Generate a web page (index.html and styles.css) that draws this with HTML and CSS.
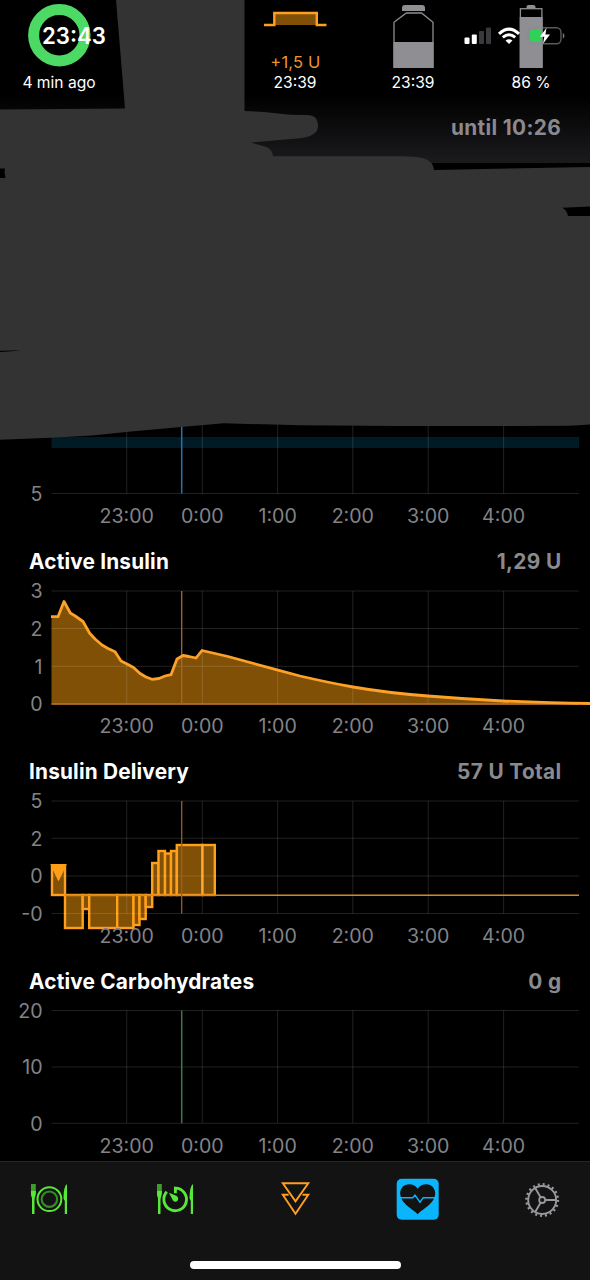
FILE: index.html
```html
<!DOCTYPE html>
<html lang="en">
<head>
    <meta charset="UTF-8">
    <meta name="viewport" content="width=device-width, initial-scale=1.0">
    <title>Loop</title>
    <link rel="stylesheet" href="styles.css">
</head>
<body>
    <div class="screen">
        <header class="hud">
            <div class="hud-item">
                <svg class="hud-icon" viewBox="0 0 118 71">
                    <circle cx="59.3" cy="35.3" r="25.7" fill="none" stroke="#4cd964" stroke-width="11"/>
                </svg>
                <span class="hud-label">4 min ago</span>
            </div>
            <div class="hud-item"></div>
            <div class="hud-item">
                <svg class="hud-icon" viewBox="0 0 118 71">
                    <rect x="38" y="13" width="42" height="12" fill="#805006"/>
                    <path d="M28 25H38.3V13H80.8V25H90.5" fill="none" stroke="#ff9f22" stroke-width="2.4"/>
                    <text class="basal" x="59.3" y="67.5" text-anchor="middle" textLength="50">+1,5 U</text>
                </svg>
                <span class="hud-label">23:39</span>
            </div>
            <div class="hud-item">
                <svg class="hud-icon" viewBox="0 0 118 71">
                    <path d="M48 11V8Q48 5 51 5H68Q71 5 71 8V11Z" fill="#8e8e93"/>
                    <path d="M40 67.3V22.3L52.3 13H67.5L79 22.3V67.3Z" fill="none" stroke="#8e8e93" stroke-width="1.3"/>
                    <rect x="39.5" y="42" width="40" height="26" fill="#8e8e93"/>
                </svg>
                <span class="hud-label">23:39</span>
            </div>
            <div class="hud-item">
                <svg class="hud-icon" viewBox="0 0 118 71">
                    <path d="M54.5 8.5V7Q54.5 5 56.5 5H61.5Q63.5 5 63.5 7V8.5Z" fill="#8e8e93"/>
                    <rect x="48.4" y="8.7" width="21.5" height="58.5" fill="none" stroke="#8e8e93" stroke-width="1.3"/>
                    <rect x="47.7" y="17" width="23" height="51" fill="#8e8e93"/>
                </svg>
                <span class="hud-label">86 %</span>
            </div>
        </header>

        <section class="status-row">
            <span class="value">until 10:26</span>
        </section>

        <section class="glucose">
            <svg class="chart" viewBox="0 0 590 378" height="378">
                <rect x="51.5" y="274" width="527.5" height="11" fill="#001a26"/>
                <path class="grid" d="M51.5 330.5H579M126.7 230V330.5M202.3 230V330.5M277.6 230V330.5M352.8 230V330.5M428.2 230V330.5M503.6 230V330.5"/>
                <path d="M181.7 230V330.5" stroke="#2c71aa" stroke-width="1.5"/>
                <g class="axis-y">
                    <text x="42.5" y="337.8">5</text>
                </g>
                <g class="axis-x">
                    <text x="126.7" y="360.2">23:00</text>
                    <text x="202.3" y="360.2">0:00</text>
                    <text x="277.6" y="360.2">1:00</text>
                    <text x="352.8" y="360.2">2:00</text>
                    <text x="428.2" y="360.2">3:00</text>
                    <text x="503.6" y="360.2">4:00</text>
                </g>
            </svg>
        </section>

        <section class="panel">
            <div class="panel-head">
                <h2 class="panel-title">Active Insulin</h2>
                <span class="value">1,29 U</span>
            </div>
            <svg class="chart" viewBox="0 0 590 168" height="168">
                <path d="M51.5 33.7H58L64 18.5L70.3 30L76 33.5L83 38.5L89.5 50L95 56L102 62L108 65.5L115 68.8L121 78L127 81L133.5 84.5L140 90.5L146 94L152 96.3L159 95.5L165 93L171 91.7L177 76L183 72.5L189 73.5L196 75L202 67.5L228 73.5L278 87.2L300 93Q328 99.5 353 104Q388 110 428 113Q465 116 503 118Q550 119.8 590 120.7V121.5H51.5Z" fill="#805006"/>
                <path class="grid" d="M51.5 8H579M51.5 45.5H579M51.5 83.3H579M126.7 8V121M202.3 8V121M277.6 8V121M352.8 8V121M428.2 8V121M503.6 8V121"/>
                <path d="M51.5 121H579" stroke="#b97334" stroke-width="1.3"/>
                <path d="M181.7 8V121" stroke="#a9652d" stroke-width="1.3"/>
                <path class="line" d="M51 33.7H58L64 18.5L70.3 30L76 33.5L83 38.5L89.5 50L95 56L102 62L108 65.5L115 68.8L121 78L127 81L133.5 84.5L140 90.5L146 94L152 96.3L159 95.5L165 93L171 91.7L177 76L183 72.5L189 73.5L196 75L202 67.5L228 73.5L278 87.2L300 93Q328 99.5 353 104Q388 110 428 113Q465 116 503 118Q550 119.8 590 120.5"/>
                <g class="axis-y">
                    <text x="42.5" y="15.2">3</text>
                    <text x="42.5" y="52.8">2</text>
                    <text x="42.5" y="90.5">1</text>
                    <text x="42.5" y="128.2">0</text>
                </g>
                <g class="axis-x">
                    <text x="126.7" y="150.2">23:00</text>
                    <text x="202.3" y="150.2">0:00</text>
                    <text x="277.6" y="150.2">1:00</text>
                    <text x="352.8" y="150.2">2:00</text>
                    <text x="428.2" y="150.2">3:00</text>
                    <text x="503.6" y="150.2">4:00</text>
                </g>
            </svg>
        </section>

        <section class="panel">
            <div class="panel-head">
                <h2 class="panel-title">Insulin Delivery</h2>
                <span class="value">57 U Total</span>
            </div>
            <svg class="chart" viewBox="0 0 590 168" height="168">
                <!-- temp basal doses -->
                <g class="doses">
                    <rect x="52" y="74" width="13" height="28"/>
                    <rect x="65" y="102" width="17.7" height="33"/>
                    <rect x="82.7" y="102" width="6.5" height="14"/>
                    <rect x="89.2" y="102" width="28" height="33"/>
                    <rect x="117.2" y="102" width="16.3" height="33"/>
                    <rect x="133.5" y="102" width="6" height="30"/>
                    <rect x="139.5" y="102" width="6.2" height="24"/>
                    <rect x="145.7" y="102" width="6.5" height="12"/>
                    <rect x="152.2" y="70" width="6.3" height="32"/>
                    <rect x="158.5" y="58" width="6.5" height="44"/>
                    <rect x="165" y="60.5" width="6" height="41.5"/>
                    <rect x="171" y="58" width="5.8" height="44"/>
                    <rect x="176.8" y="52" width="25.7" height="50"/>
                    <rect x="202.5" y="52" width="12.3" height="50"/>
                </g>
                <path class="grid" d="M51.5 8H579M51.5 45.3H579M51.5 83H579M51.5 120.5H579M126.7 8V120.5M202.3 8V120.5M277.6 8V120.5M352.8 8V120.5M428.2 8V120.5M503.6 8V120.5"/>
                <path d="M65 102.2H579" stroke="#d9861f" stroke-width="1.4"/>
                <path d="M181.7 8V120.5" stroke="#a05c24" stroke-width="1.3"/>
                <path d="M50.8 71.5H66.3L58.5 87.5Z" fill="#ff9f17" stroke="#ff9f17"/>
                <g class="axis-y">
                    <text x="42.5" y="15">5</text>
                    <text x="42.5" y="52.6">2</text>
                    <text x="42.5" y="90.4">0</text>
                    <text x="42.5" y="128">-0</text>
                </g>
                <g class="axis-x">
                    <text x="126.7" y="150.2">23:00</text>
                    <text x="202.3" y="150.2">0:00</text>
                    <text x="277.6" y="150.2">1:00</text>
                    <text x="352.8" y="150.2">2:00</text>
                    <text x="428.2" y="150.2">3:00</text>
                    <text x="503.6" y="150.2">4:00</text>
                </g>
            </svg>
        </section>

        <section class="panel panel-last">
            <div class="panel-head">
                <h2 class="panel-title">Active Carbohydrates</h2>
                <span class="value">0 g</span>
            </div>
            <svg class="chart" viewBox="0 0 590 158" height="158">
                <path class="grid" d="M51.5 7.5H579M51.5 64H579M51.5 120.3H579M126.7 7.5V120M202.3 7.5V120M277.6 7.5V120M352.8 7.5V120M428.2 7.5V120M503.6 7.5V120"/>
                <path d="M181.7 7.5V120.3" stroke="#3f7a38" stroke-width="1.5"/>
                <g class="axis-y">
                    <text x="42.5" y="14.5">20</text>
                    <text x="42.5" y="71">10</text>
                    <text x="42.5" y="127.5">0</text>
                </g>
                <g class="axis-x">
                    <text x="126.7" y="149.7">23:00</text>
                    <text x="202.3" y="149.7">0:00</text>
                    <text x="277.6" y="149.7">1:00</text>
                    <text x="352.8" y="149.7">2:00</text>
                    <text x="428.2" y="149.7">3:00</text>
                    <text x="503.6" y="149.7">4:00</text>
                </g>
            </svg>
        </section>

        <nav class="tabbar">
            <!-- carbs -->
            <svg class="tab" viewBox="0 0.5 42 42">
                <g fill="#57e83a">
                    <path d="M4 20H6.5V36.5H4Z"/>
                    <path d="M3 6.5H7.8V15Q7.8 18 6.5 19.5V22H4V19.5Q3 18 3 15Z" opacity=".65"/>
                    <path d="M3 13.5H7.8V16Q7.5 19 6.5 20.5H4Q3 18 3 16Z"/>
                    <path d="M39 6.5V36.5H36.8V23.5L35.5 21Q35.5 9 39 6.5Z"/>
                </g>
                <circle cx="21.4" cy="21.7" r="11.9" fill="none" stroke="#57e83a" stroke-width="2"/>
                <circle cx="21.4" cy="21.7" r="7.7" fill="none" stroke="#378a29" stroke-width="2.2"/>
            </svg>
            <!-- pre-meal target -->
            <svg class="tab" viewBox="-3 0.5 42 42">
                <g fill="#57e83a">
                    <path d="M4 20H6.5V36.5H4Z"/>
                    <path d="M3 6.5H7.8V15Q7.8 18 6.5 19.5V22H4V19.5Q3 18 3 15Z" opacity=".65"/>
                    <path d="M3 13.5H7.8V16Q7.5 19 6.5 20.5H4Q3 18 3 16Z"/>
                    <path d="M39 6.5V36.5H36.8V23.5L35.5 21Q35.5 9 39 6.5Z"/>
                    <path d="M15 15.2L22.8 18.6Q25.3 21.3 23.3 23.5Q20.9 25.3 18.8 22.7Z"/>
                </g>
                <path d="M21.4 15.8V10.6A11.3 11.3 0 1 1 12.8 14.3" fill="none" stroke="#57e83a" stroke-width="2.9"/>
            </svg>
            <!-- bolus -->
            <svg class="tab" viewBox="0.5 0.7 42 42">
                <path d="M14.1 17.5H8.3L21 36.6L33.8 17.5H28" fill="none" stroke="#ff9f22" stroke-width="1.9"/>
                <path d="M8.3 5.9H33.8L21 24Z" fill="none" stroke="#ff9f22" stroke-width="1.9"/>
            </svg>
            <!-- overrides, enabled -->
            <svg class="tab" viewBox="1.8 0.8 42 42">
                <rect x="0.5" y="1.5" width="42" height="41" rx="5" fill="#0ab5fc"/>
                <path d="M21.5 37C17 32 4 26.5 4 15.8C4 11 7.8 7 12.8 7C16.8 7 20 8.8 21.5 11.5C23 8.8 26.2 7 30.2 7C35.2 7 39 11 39 15.8C39 26.5 26 32 21.5 37Z" fill="#131313"/>
                <path d="M3.5 20.5H16.5L18.8 18L23.8 25L27 20.5H39.5" fill="none" stroke="#0ab5fc" stroke-width="1.4"/>
            </svg>
            <!-- settings -->
            <svg class="tab" viewBox="0 0 42 42">
                <g fill="none" stroke="#97979c">
                    <circle cx="21.2" cy="22" r="15.7" stroke-width="2.5" stroke-dasharray="2 2.932"/>
                    <circle cx="21.2" cy="22" r="14" stroke-width="1.9"/>
                    <circle cx="21.2" cy="22" r="3" stroke-width="1.8"/>
                    <path d="M24.2 22H35.2M19.7 19.4L14.2 9.9M19.7 24.6L14.2 34.1" stroke-width="1.9"/>
                </g>
            </svg>
        </nav>
        <div class="home-area">
            <div class="home-indicator"></div>
        </div>

        <!-- scribbled-out area -->
        <svg class="scribble" viewBox="0 0 590 445">
            <path d="M116 0L121 60L125 108.5L0 109.5V168.5H5L4.5 172L5.5 178H0V439.8L51 437.8L92 435.5L126 432L181 427L224 423.3L300 425.3L400 426H500L570 425.7L590 424.5V216H568Q567 210 562 207.8L590 206.5V167L434 170Q433 161 424 158.5Q416 156.3 400 156.3H273Q273 150 266 146.7Q259 145 251 142.5L300 138.3Q318 136 318 126Q318 115 307 115L290 114.8L264 112L244.5 111V0Z" fill="#333"/>
            <path d="M0 350.7L12 350.5L21 350L12 351.3L0 352Z" fill="#000"/>
        </svg>

        <div class="statusbar">
            <span class="clock">23:43</span>
            <svg class="status-icons" viewBox="0 0 102 24" width="102" height="24">
                <rect x="0.5" y="13.5" width="5" height="6.5" rx="1" fill="#fff"/>
                <rect x="7.8" y="10.5" width="5" height="9.5" rx="1" fill="#fff"/>
                <rect x="15" y="7" width="5" height="13" rx="1" fill="#3a3a3c"/>
                <rect x="22" y="3.5" width="5" height="16.5" rx="1" fill="#3a3a3c"/>
                <g fill="none" stroke="#fff" stroke-width="3">
                    <path d="M35 9.8Q45 0.3 55 9.8"/>
                    <path d="M38.8 13.4Q45 8 51.2 13.4"/>
                </g>
                <path d="M41.5 16.6Q45 13.8 48.5 16.6L45 20Z" fill="#fff"/>
                <rect x="64" y="3.7" width="33" height="16" rx="4.5" fill="none" stroke="#8b8b8f" stroke-opacity=".65" stroke-width="1.4"/>
                <path d="M98.8 9V14.5Q100.5 13.8 100.5 11.7Q100.5 9.8 98.8 9Z" fill="#77777a"/>
                <path d="M68.5 5.7H77.5V17.7H68.5Q66 17.7 66 15.2V8.2Q66 5.7 68.5 5.7Z" fill="#30d158"/>
                <path d="M82.5 3.8L76 12.8H80.3L79 19.8L86 10.5H81.4Z" fill="#fff"/>
            </svg>
        </div>
    </div>
</body>
</html>
```
FILE: styles.css
```css
* {
    margin: 0;
    padding: 0;
    box-sizing: border-box;
}

body {
    font-family: Inter, "Liberation Sans", sans-serif;
    background: #000;
    color: #fff;
}

.screen {
    position: relative;
    width: 590px;
    height: 1280px;
    overflow: hidden;
    background: #000;
}

.hud {
    display: grid;
    grid-template-columns: repeat(5, 1fr);
    height: 95px;
}

.hud-item {
    display: flex;
    flex-direction: column;
    align-items: center;
}

.hud-icon {
    display: block;
    width: 118px;
    height: 71px;
}

.hud-label {
    font-size: 15.6px;
    line-height: 23px;
}

.basal {
    font-size: 16.5px;
    fill: #f0932b;
}

.status-row {
    display: flex;
    align-items: center;
    justify-content: flex-end;
    height: 68px;
    padding: 0 29px 3px;
    background: linear-gradient(#000, #1b1b1e);
}

.value {
    font-size: 20.8px;
    font-weight: 700;
    letter-spacing: 0.35px;
    color: #8a8a8e;
}

.glucose {
    height: 378px;
}

.panel {
    height: 210px;
}

.panel-last {
    height: 200px;
}

.panel-head {
    display: flex;
    align-items: center;
    justify-content: space-between;
    height: 42px;
    padding: 0 28.5px 2px 29px;
}

.panel-title {
    font-size: 20.8px;
    font-weight: 700;
    letter-spacing: 0.18px;
}

.chart {
    display: block;
    width: 590px;
    overflow: visible;
}

.grid {
    fill: none;
    stroke: #fff;
    stroke-opacity: 0.13;
    stroke-width: 1;
}

.line {
    fill: none;
    stroke: #fda128;
    stroke-width: 2.8;
    stroke-linejoin: round;
}

.doses rect {
    fill: #805006;
    stroke: #ff9f1c;
    stroke-width: 2.4;
}

.axis-x text,
.axis-y text {
    font-size: 19.6px;
    fill: #838387;
}

.axis-x text {
    text-anchor: middle;
}

.axis-y text {
    text-anchor: end;
}

.tabbar {
    display: flex;
    justify-content: space-between;
    height: 88px;
    padding: 16px 27px 0 28px;
    background: #131313;
    border-top: 1px solid #262626;
}

.tab {
    width: 42px;
    height: 42px;
    overflow: visible;
}

.home-area {
    display: flex;
    justify-content: center;
    height: 31px;
    padding-top: 12px;
    background: #131313;
}

.home-indicator {
    width: 211px;
    height: 8px;
    border-radius: 4px;
    background: #fff;
}

.scribble {
    position: absolute;
    top: 0;
    left: 0;
    width: 590px;
    height: 445px;
}

/* system status bar sits on top of the HUD */
.statusbar {
    position: absolute;
    top: 0;
    left: 0;
    display: flex;
    align-items: center;
    justify-content: space-between;
    width: 590px;
    height: 72px;
    padding: 0 24px 0 42px;
}

.clock {
    padding-bottom: 2px;
    font-size: 22.2px;
    font-weight: 600;
}

.status-icons {
    display: block;
}
```
